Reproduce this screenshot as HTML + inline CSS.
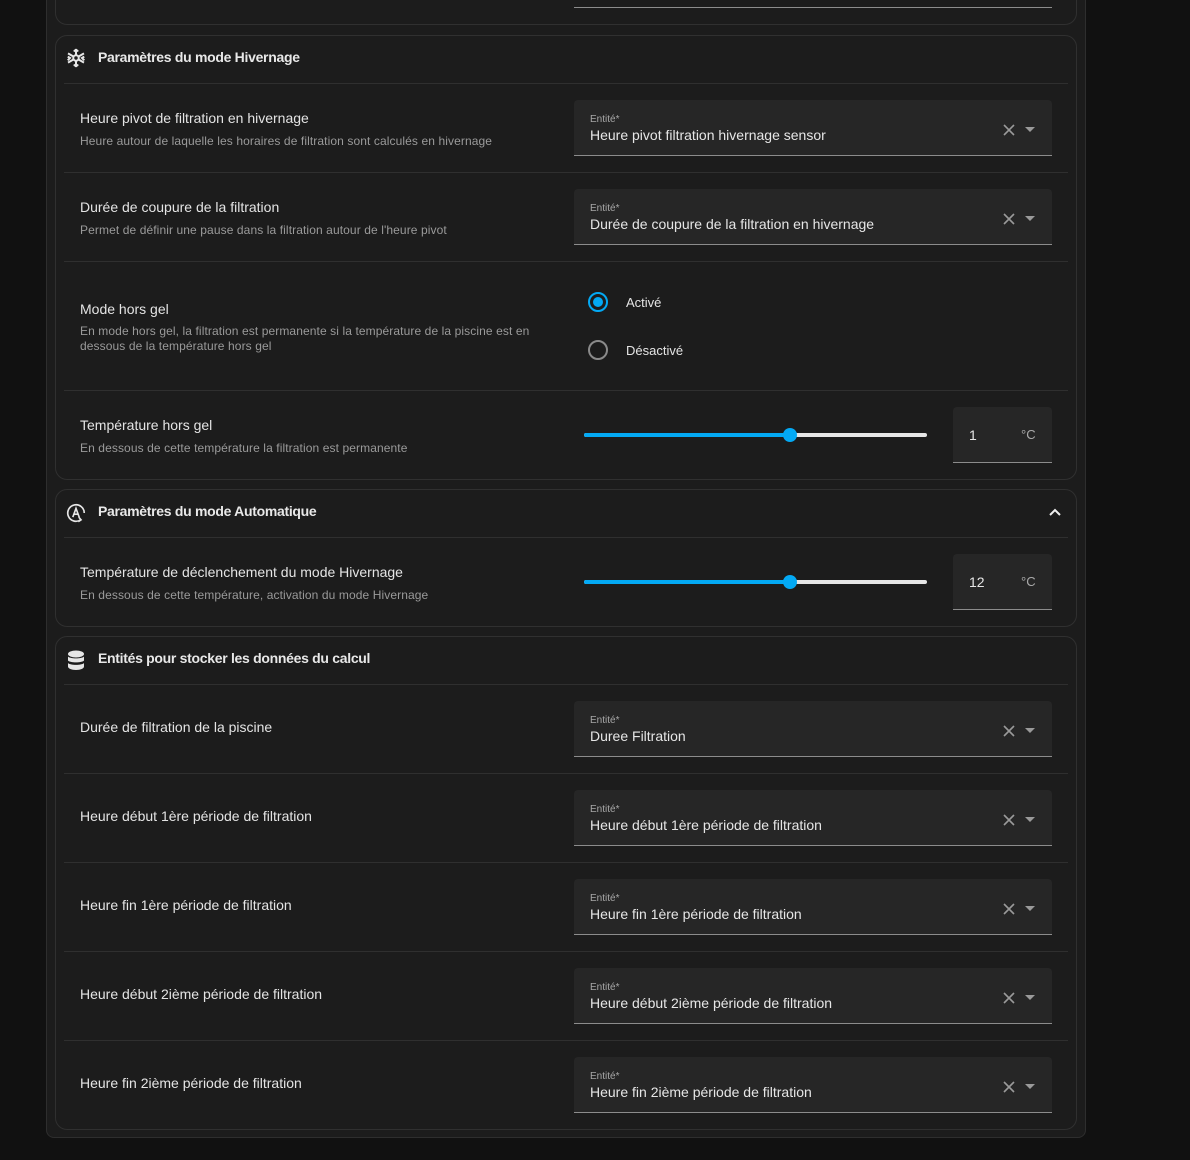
<!DOCTYPE html>
<html><head><meta charset="utf-8"><style>
*{box-sizing:border-box;margin:0;padding:0}
body{width:1190px;height:1160px;background:#111;font-family:"Liberation Sans",sans-serif;position:relative;overflow:hidden;color:#e1e1e1}
.abs{position:absolute}
.outer{left:46px;top:-20px;width:1040px;height:1158px;background:#1c1c1c;border:1px solid #2e2e2e;border-radius:0 0 8px 8px}
.card{position:absolute;left:55px;width:1022px;border:1px solid #303030;border-radius:12px;background:#1c1c1c}
.hdiv{position:absolute;left:64px;width:1004px;height:1px;background:#2f2f2f}
.title{position:absolute;left:98px;font-size:14px;font-weight:bold;color:#e8e8e8;letter-spacing:-0.3px}
.lab{position:absolute;left:80px;font-size:14px;color:#e4e4e4}
.desc{position:absolute;left:80px;font-size:12px;color:#9a9a9a;line-height:15px;width:470px;letter-spacing:0.1px}
.inp{position:absolute;left:574px;width:478px;height:56px;background:#262626;border-radius:4px 4px 0 0;border-bottom:1px solid #8c8c8c}
.inp .l{position:absolute;left:16px;top:14px;font-size:10px;color:#a8a8a8}
.inp .v{position:absolute;left:16px;top:27px;font-size:14px;color:#e6e6e6}
.inp svg{position:absolute;top:23px}
.num{position:absolute;left:953px;width:99px;height:56px;background:#262626;border-radius:4px 4px 0 0;border-bottom:1px solid #8c8c8c}
.num .v{position:absolute;left:16px;top:20px;font-size:14px;color:#e6e6e6}
.num .u{position:absolute;left:68px;top:20px;font-size:13px;color:#aaa}
.track{position:absolute;left:584px;width:343px;height:4px;background:#e6e6e6;border-radius:2px}
.track i{position:absolute;left:0;top:0;height:4px;width:206px;background:#03a9f4;border-radius:2px}
.track b{position:absolute;left:199px;top:-5px;width:14px;height:14px;border-radius:50%;background:#03a9f4}
</style></head><body>
<div class="abs outer"></div>
<div class="card" style="top:-20px;height:45px"></div>
<div class="abs" style="left:574px;top:7px;width:478px;height:1px;background:#8c8c8c"></div>

<div class="card" style="top:35px;height:445px"></div>
<svg class="abs" style="left:65px;top:47px" width="22" height="22" viewBox="0 0 24 24" fill="none" stroke="#e6e6e6" stroke-width="2.2"><path d="M12 2v20M3.3 7l17.4 10M3.3 17L20.7 7M9.5 3.5L12 5l2.5-1.5M9.5 20.5L12 19l2.5 1.5M3 10.5l2.5 1.5L3 14.5M21 10.5L18.5 12l2.5 2.5"/><circle cx="12" cy="12" r="3" fill="#1c1c1c"/></svg>
<div class="title" style="top:49px">Paramètres du mode Hivernage</div>
<div class="hdiv" style="top:83px"></div>

<div class="lab" style="top:110px">Heure pivot de filtration en hivernage</div>
<div class="desc" style="top:134px">Heure autour de laquelle les horaires de filtration sont calculés en hivernage</div>
<div class="inp" style="top:100px"><div class="l">Entité*</div><div class="v">Heure pivot filtration hivernage sensor</div>
<svg style="left:428px" width="14" height="14" viewBox="0 0 14 14" stroke="#9a9a9a" stroke-width="1.6"><path d="M2 2l10 10M12 2L2 12"/></svg>
<svg style="left:451px;top:27px" width="10" height="6" viewBox="0 0 10 6"><path d="M0 0h10L5 5z" fill="#9a9a9a"/></svg></div>
<div class="hdiv" style="top:172px"></div>

<div class="lab" style="top:199px">Durée de coupure de la filtration</div>
<div class="desc" style="top:223px">Permet de définir une pause dans la filtration autour de l'heure pivot</div>
<div class="inp" style="top:189px"><div class="l">Entité*</div><div class="v">Durée de coupure de la filtration en hivernage</div>
<svg style="left:428px" width="14" height="14" viewBox="0 0 14 14" stroke="#9a9a9a" stroke-width="1.6"><path d="M2 2l10 10M12 2L2 12"/></svg>
<svg style="left:451px;top:27px" width="10" height="6" viewBox="0 0 10 6"><path d="M0 0h10L5 5z" fill="#9a9a9a"/></svg></div>
<div class="hdiv" style="top:261px"></div>

<div class="lab" style="top:301px">Mode hors gel</div>
<div class="desc" style="top:324px">En mode hors gel, la filtration est permanente si la température de la piscine est en dessous de la température hors gel</div>
<svg class="abs" style="left:587px;top:291px" width="22" height="22"><circle cx="11" cy="11" r="9" fill="none" stroke="#03a9f4" stroke-width="2"/><circle cx="11" cy="11" r="5" fill="#03a9f4"/></svg>
<div class="abs" style="left:626px;top:295px;font-size:13px;color:#e4e4e4">Activé</div>
<svg class="abs" style="left:587px;top:339px" width="22" height="22"><circle cx="11" cy="11" r="9" fill="none" stroke="#8a8a8a" stroke-width="2"/></svg>
<div class="abs" style="left:626px;top:343px;font-size:13px;color:#e4e4e4">Désactivé</div>
<div class="hdiv" style="top:390px"></div>

<div class="lab" style="top:417px">Température hors gel</div>
<div class="desc" style="top:441px">En dessous de cette température la filtration est permanente</div>
<div class="track" style="top:433px"><i></i><b></b></div>
<div class="num" style="top:407px"><div class="v">1</div><div class="u">°C</div></div>

<div class="card" style="top:489px;height:138px"></div>
<svg class="abs" style="left:65px;top:502px" width="22" height="22" viewBox="0 0 24 24" fill="none" stroke="#e6e6e6" stroke-width="1.8"><path d="M17 19.5A9 9 0 1 1 21 12"/><path d="M14.5 21.5l3-2-2.5-3"/><path d="M8.5 16.5L12 7l3.5 9.5M9.7 13.3h4.6"/></svg>
<div class="title" style="top:503px">Paramètres du mode Automatique</div>
<svg class="abs" style="left:1049px;top:508px" width="12" height="8" viewBox="0 0 12 8" fill="none" stroke="#eee" stroke-width="2"><path d="M1 7l5-5 5 5"/></svg>
<div class="hdiv" style="top:537px"></div>
<div class="lab" style="top:564px">Température de déclenchement du mode Hivernage</div>
<div class="desc" style="top:588px">En dessous de cette température, activation du mode Hivernage</div>
<div class="track" style="top:580px"><i></i><b></b></div>
<div class="num" style="top:554px"><div class="v">12</div><div class="u">°C</div></div>

<div class="card" style="top:636px;height:494px"></div>
<svg class="abs" style="left:67px;top:650px" width="18" height="20" viewBox="0 0 18 20" fill="#e6e6e6"><ellipse cx="9" cy="4" rx="8" ry="3.5"/><path d="M1 6.5c2 2.5 14 2.5 16 0v4c-2 2.5-14 2.5-16 0z"/><path d="M1 13c2 2.5 14 2.5 16 0v3.5c0 2-3.5 3.5-8 3.5s-8-1.5-8-3.5z"/></svg>
<div class="title" style="top:650px">Entités pour stocker les données du calcul</div>
<div class="hdiv" style="top:684px"></div>

<div class="lab" style="top:719px">Durée de filtration de la piscine</div>
<div class="inp" style="top:701px"><div class="l">Entité*</div><div class="v">Duree Filtration</div>
<svg style="left:428px" width="14" height="14" viewBox="0 0 14 14" stroke="#9a9a9a" stroke-width="1.6"><path d="M2 2l10 10M12 2L2 12"/></svg>
<svg style="left:451px;top:27px" width="10" height="6" viewBox="0 0 10 6"><path d="M0 0h10L5 5z" fill="#9a9a9a"/></svg></div>
<div class="hdiv" style="top:773px"></div>

<div class="lab" style="top:808px">Heure début 1ère période de filtration</div>
<div class="inp" style="top:790px"><div class="l">Entité*</div><div class="v">Heure début 1ère période de filtration</div>
<svg style="left:428px" width="14" height="14" viewBox="0 0 14 14" stroke="#9a9a9a" stroke-width="1.6"><path d="M2 2l10 10M12 2L2 12"/></svg>
<svg style="left:451px;top:27px" width="10" height="6" viewBox="0 0 10 6"><path d="M0 0h10L5 5z" fill="#9a9a9a"/></svg></div>
<div class="hdiv" style="top:862px"></div>

<div class="lab" style="top:897px">Heure fin 1ère période de filtration</div>
<div class="inp" style="top:879px"><div class="l">Entité*</div><div class="v">Heure fin 1ère période de filtration</div>
<svg style="left:428px" width="14" height="14" viewBox="0 0 14 14" stroke="#9a9a9a" stroke-width="1.6"><path d="M2 2l10 10M12 2L2 12"/></svg>
<svg style="left:451px;top:27px" width="10" height="6" viewBox="0 0 10 6"><path d="M0 0h10L5 5z" fill="#9a9a9a"/></svg></div>
<div class="hdiv" style="top:951px"></div>

<div class="lab" style="top:986px">Heure début 2ième période de filtration</div>
<div class="inp" style="top:968px"><div class="l">Entité*</div><div class="v">Heure début 2ième période de filtration</div>
<svg style="left:428px" width="14" height="14" viewBox="0 0 14 14" stroke="#9a9a9a" stroke-width="1.6"><path d="M2 2l10 10M12 2L2 12"/></svg>
<svg style="left:451px;top:27px" width="10" height="6" viewBox="0 0 10 6"><path d="M0 0h10L5 5z" fill="#9a9a9a"/></svg></div>
<div class="hdiv" style="top:1040px"></div>

<div class="lab" style="top:1075px">Heure fin 2ième période de filtration</div>
<div class="inp" style="top:1057px"><div class="l">Entité*</div><div class="v">Heure fin 2ième période de filtration</div>
<svg style="left:428px" width="14" height="14" viewBox="0 0 14 14" stroke="#9a9a9a" stroke-width="1.6"><path d="M2 2l10 10M12 2L2 12"/></svg>
<svg style="left:451px;top:27px" width="10" height="6" viewBox="0 0 10 6"><path d="M0 0h10L5 5z" fill="#9a9a9a"/></svg></div>
</body></html>
